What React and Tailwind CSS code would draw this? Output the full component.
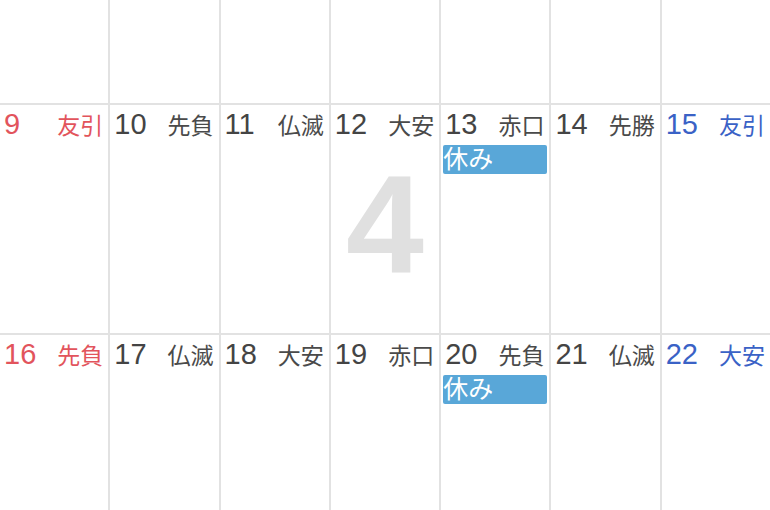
import React from "react";

const weeks = [
  [
    { d: 9, r: "友引", c: "sun" },
    { d: 10, r: "先負" },
    { d: 11, r: "仏滅" },
    { d: 12, r: "大安" },
    { d: 13, r: "赤口", ev: "休み" },
    { d: 14, r: "先勝" },
    { d: 15, r: "友引", c: "sat" },
  ],
  [
    { d: 16, r: "先負", c: "sun" },
    { d: 17, r: "仏滅" },
    { d: 18, r: "大安" },
    { d: 19, r: "赤口" },
    { d: 20, r: "先負", ev: "休み" },
    { d: 21, r: "仏滅" },
    { d: 22, r: "大安", c: "sat" },
  ],
];

const font = { fontFamily: '"Liberation Sans", "Noto Sans CJK JP", sans-serif' };

function Cell({ day, i }) {
  const numColor =
    day.c === "sun" ? "text-[#e2545c]" : day.c === "sat" ? "text-[#3a62c6]" : "text-[#444444]";
  const rkColor =
    day.c === "sun" ? "text-[#e2545c]" : day.c === "sat" ? "text-[#3a62c6]" : "text-[#4a4a4a]";
  return (
    <div
      className={`flex-1 min-w-0 flex flex-col border-t border-b border-[#e2e2e2] ${
        i > 0 ? "border-l" : ""
      } ${i < 6 ? "border-r" : ""}`}
    >
      <div className="flex items-baseline justify-between pt-[3px] pl-[4px] pr-[5px]">
        <span className={`text-[29px] leading-[32px] ${numColor}`}>{day.d}</span>
        <span className={`text-[23px] leading-[32px] ${rkColor}`}>{day.r}</span>
      </div>
      {day.ev && (
        <div className="mt-[3px] mx-[2px] h-[29px] rounded-[2px] bg-[#59a7d8] text-white text-[25px] leading-[29px] whitespace-nowrap overflow-hidden">
          {day.ev}
        </div>
      )}
    </div>
  );
}

export default function App() {
  return (
    <div className="w-[770px] h-[510px] overflow-hidden bg-white" style={font}>
      <div className="flex h-[104px]">
        {Array.from({ length: 7 }).map((_, i) => (
          <div
            key={i}
            className={`flex-1 border-b border-[#e2e2e2] ${i > 0 ? "border-l" : ""} ${
              i < 6 ? "border-r" : ""
            }`}
          />
        ))}
      </div>
      <div className="relative flex h-[230px]">
        <div className="absolute left-0 right-0 top-[51px] text-center text-[140px] leading-[140px] font-bold text-[#e0e0e0] pointer-events-none select-none">
          4
        </div>
        {weeks[0].map((d, i) => (
          <Cell key={i} day={d} i={i} />
        ))}
      </div>
      <div className="flex h-[230px]">
        {weeks[1].map((d, i) => (
          <Cell key={i} day={d} i={i} />
        ))}
      </div>
    </div>
  );
}
